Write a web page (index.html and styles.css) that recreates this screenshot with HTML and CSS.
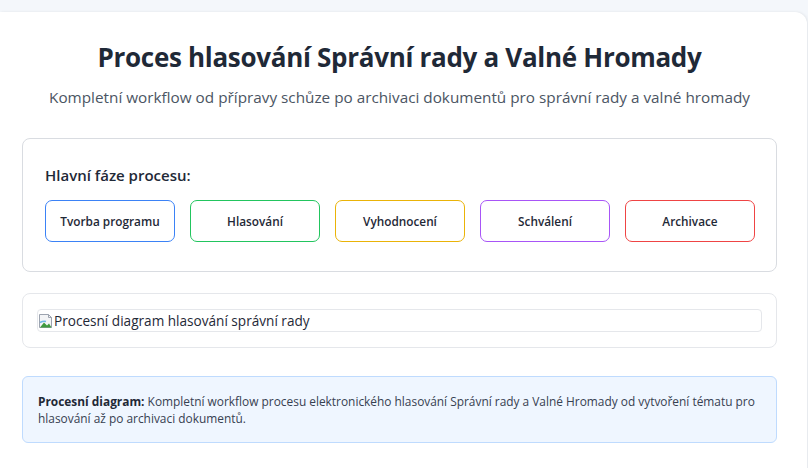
FILE: index.html
```html
<!DOCTYPE html>
<html lang="cs">
<head>
<meta charset="utf-8">
<title>Proces hlasování</title>
<link rel="stylesheet" href="styles.css">
</head>
<body>
<div class="page">
  <main class="card">
    <header class="head">
      <h1 class="title">Proces hlasování Správní rady a Valné Hromady</h1>
      <p class="subtitle">Kompletní workflow od přípravy schůze po archivaci dokumentů pro správní rady a valné hromady</p>
    </header>

    <section class="phases">
      <h2 class="phases-title">Hlavní fáze procesu:</h2>
      <div class="phase-list">
        <div class="phase phase-blue">Tvorba programu</div>
        <div class="phase phase-green">Hlasování</div>
        <div class="phase phase-yellow">Vyhodnocení</div>
        <div class="phase phase-purple">Schválení</div>
        <div class="phase phase-red">Archivace</div>
      </div>
    </section>

    <section class="diagram">
      <div class="broken-img">
        <svg class="broken-icon" width="16" height="16" viewBox="0 0 16 16" aria-hidden="true">
          <path d="M1.5 1.5h9l3 3v10h-12z" fill="#f3f4f6" stroke="#9ca3af" stroke-width="1"/>
          <path d="M10.5 1.5v3h3" fill="none" stroke="#9ca3af" stroke-width="1"/>
          <path d="M2 14.5l4-5 3 3 2-2 2.5 4z" fill="#3f9a3f"/>
          <path d="M2 9.5c2-1 4-1.5 6-1" fill="none" stroke="#6fb6e6" stroke-width="1.5"/>
        </svg><span class="alt">Procesní diagram hlasování správní rady</span>
      </div>
    </section>

    <aside class="note">
      <p><strong>Procesní diagram:</strong> Kompletní workflow procesu elektronického hlasování Správní rady a Valné Hromady od vytvoření tématu pro hlasování až po archivaci dokumentů.</p>
    </aside>
  </main>
</div>
</body>
</html>
```
FILE: styles.css
```css
* { box-sizing: border-box; }
html, body { margin: 0; padding: 0; }
body {
  background: #f4f7fb;
  font-family: "Open Sans", "Noto Sans", sans-serif;
  color: #1f2937;
  height: 468px;
  overflow: hidden;
}
.page {
  padding-top: 12px;
}
.card {
  width: 807px;
  background: #fff;
  border-radius: 0 12px 12px 0;
  box-shadow: 1px 0 3px rgba(0,0,0,0.08);
  padding: 26px 30px 40px 22px;
  min-height: 500px;
}
.head {
  text-align: center;
  margin-bottom: 30px;
}
.title {
  margin: 0;
  font-size: 26px;
  letter-spacing: -0.3px;
  font-weight: 700;
  color: #1f2937;
  line-height: 38px;
}
.subtitle {
  margin: 10px 0 0;
  font-size: 15.3px;
  color: #4b5563;
  line-height: 22px;
}
.phases {
  border: 1px solid #d9dce1;
  border-radius: 8px;
  padding: 24px 22px 29px;
  margin-bottom: 21px;
}
.phases-title {
  margin: 0 0 13px;
  font-size: 15px;
  font-weight: 600;
  line-height: 24px;
  color: #1f2937;
}
.phase-list {
  display: grid;
  grid-template-columns: repeat(5, 130px);
  gap: 15px;
}
.phase {
  height: 42px;
  border: 1px solid;
  border-radius: 7px;
  display: flex;
  align-items: center;
  justify-content: center;
  font-size: 11.8px;
  font-weight: 600;
  color: #1f2937;
}
.phase-blue { border-color: #3b82f6; }
.phase-green { border-color: #22c55e; }
.phase-yellow { border-color: #eab308; }
.phase-purple { border-color: #a855f7; }
.phase-red { border-color: #ef4444; }

.diagram {
  border: 1px solid #e5e7eb;
  border-radius: 8px;
  padding: 15px 14px 15px 14px;
  margin-bottom: 28px;
}
.broken-img {
  display: flex;
  align-items: center;
  height: 23px;
  border: 1px solid #e5e7eb;
  border-radius: 4px;
  font-family: "Open Sans", sans-serif;
  font-size: 13.6px;
  color: #1f2937;
}
.broken-icon { flex: none; }
.alt { line-height: 20px; }

.note {
  background: #eff6ff;
  border: 1px solid #bfdbfe;
  border-radius: 6px;
  padding: 16px 12px 15px 15px;
}
.note p {
  margin: 0;
  font-size: 11.9px;
  line-height: 17px;
  color: #374151;
}
.note strong { font-weight: 700; color: #1f2937; }
```
